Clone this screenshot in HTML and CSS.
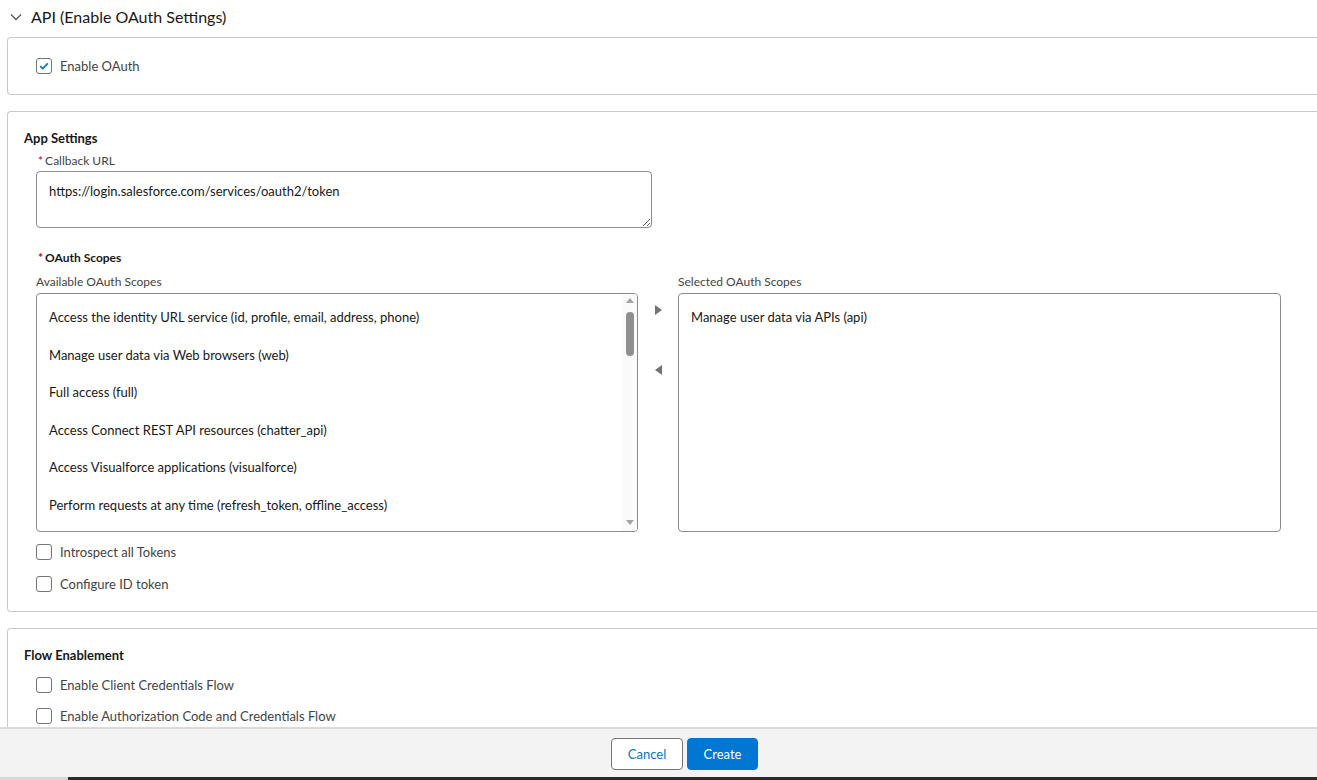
FILE: index.html
```html
<!DOCTYPE html>
<html lang="en">
<head>
<meta charset="utf-8">
<title>API (Enable OAuth Settings)</title>
<link rel="stylesheet" href="styles.css">
</head>
<body>
<div class="page">
  <div class="section-header">
    <svg class="chevron" width="12" height="8" viewBox="0 0 12 8"><path d="M1 1.5 L6 6.5 L11 1.5" fill="none" stroke="#5c5c5c" stroke-width="1.4"/></svg>
    <span class="section-title">API (Enable OAuth Settings)</span>
  </div>

  <div class="card card-oauth">
    <label class="check-row">
      <span class="checkbox checked"><svg width="10" height="8" viewBox="0 0 10 8"><path d="M1.2 4.2 L3.8 6.6 L8.8 1.4" fill="none" stroke="#0176d3" stroke-width="1.7"/></svg></span>
      <span class="check-label">Enable OAuth</span>
    </label>
  </div>

  <div class="card card-app">
    <div class="card-title">App Settings</div>
    <div class="field">
      <div class="field-label"><span class="req">*</span>Callback URL</div>
      <textarea class="textarea">https://login.salesforce.com/services/oauth2/token</textarea>
    </div>

    <div class="field scopes">
      <div class="scopes-title"><span class="req">*</span>OAuth Scopes</div>
      <div class="dual">
        <div class="dual-col">
          <div class="list-label">Available OAuth Scopes</div>
          <div class="listbox">
            <ul class="options">
              <li>Access the identity URL service (id, profile, email, address, phone)</li>
              <li>Manage user data via Web browsers (web)</li>
              <li>Full access (full)</li>
              <li>Access Connect REST API resources (chatter_api)</li>
              <li>Access Visualforce applications (visualforce)</li>
              <li>Perform requests at any time (refresh_token, offline_access)</li>
            </ul>
            <div class="scrollbar">
              <span class="sb-up"></span>
              <span class="sb-thumb"></span>
              <span class="sb-space"></span>
              <span class="sb-down"></span>
            </div>
          </div>
        </div>
        <div class="dual-buttons">
          <span class="tri-right"></span>
          <span class="tri-left"></span>
        </div>
        <div class="dual-col">
          <div class="list-label">Selected OAuth Scopes</div>
          <div class="listbox selected">
            <ul class="options">
              <li>Manage user data via APIs (api)</li>
            </ul>
          </div>
        </div>
      </div>
      <label class="check-row row32 first">
        <span class="checkbox"></span>
        <span class="check-label">Introspect all Tokens</span>
      </label>
      <label class="check-row row32">
        <span class="checkbox"></span>
        <span class="check-label">Configure ID token</span>
      </label>
    </div>
  </div>

  <div class="card card-flow">
    <div class="card-title">Flow Enablement</div>
    <div class="flow-list">
      <label class="check-row row31">
        <span class="checkbox"></span>
        <span class="check-label">Enable Client Credentials Flow</span>
      </label>
      <label class="check-row row31">
        <span class="checkbox"></span>
        <span class="check-label">Enable Authorization Code and Credentials Flow</span>
      </label>
    </div>
  </div>
</div>

<div class="footer">
  <div class="footer-bar">
    <button class="btn btn-neutral">Cancel</button>
    <button class="btn btn-brand">Create</button>
  </div>
  <div class="taskbar"><span class="tb-light"></span><span class="tb-dark"></span></div>
</div>
</body>
</html>
```

FILE: styles.css
```css
* { box-sizing: border-box; }
html, body { margin: 0; padding: 0; background: #fff; }
body {
  font-family: Lato, "Noto Sans", "Liberation Sans", sans-serif;
  color: #181818;
  font-size: 13px;
  overflow: hidden;
  height: 780px;
}
.page { padding-left: 7px; height: 780px; overflow: hidden; }

.section-header {
  height: 37px;
  display: flex;
  align-items: center;
  padding-left: 3px;
  padding-bottom: 4px;
}
.chevron { margin-right: 9px; }
.section-title { font-size: 16px; color: #181818; }

.card {
  border: 1px solid #c9c9c9;
  border-right: none;
  border-radius: 4px 0 0 4px;
  width: 1320px;
  margin-bottom: 16px;
}
.card-oauth {
  height: 58px;
  display: flex;
  align-items: center;
  padding-left: 28px;
}
.card-app { height: 501px; padding: 18px 0 0 16px; }
.card-flow { height: 200px; padding: 18px 0 0 16px; }

.card-title { font-size: 13px; font-weight: 700; line-height: 16px; height: 16px; }

.field { padding-left: 12px; }
.field-label {
  margin-top: 8px;
  font-size: 12px;
  line-height: 14px;
  color: #444;
  padding-left: 2px;
}
.req { color: #ba0517; margin-right: 2px; }
.textarea {
  display: block;
  margin-top: 3px;
  width: 616px;
  height: 57px;
  border: 1px solid #8c8c8c;
  border-radius: 4px;
  padding: 11px 12px;
  font-family: inherit;
  font-size: 13px;
  line-height: 16px;
  color: #181818;
  resize: vertical;
  outline: none;
}

.scopes { margin-top: 22px; }
.scopes-title {
  font-size: 12px;
  font-weight: 700;
  line-height: 16px;
  padding-left: 2px;
  color: #181818;
}
.dual { display: flex; margin-top: 9px; }
.dual-col { display: flex; flex-direction: column; }
.list-label { font-size: 12px; line-height: 14px; color: #444; height: 14px; }
.listbox {
  margin-top: 4px;
  width: 602px;
  height: 239px;
  border: 1px solid #8c8c8c;
  border-radius: 4px;
  display: flex;
  overflow: hidden;
}
.listbox.selected { width: 603px; }
.options {
  list-style: none;
  margin: 0;
  padding: 5px 0 0 12px;
  flex: 1;
}
.options li {
  height: 37.6px;
  line-height: 37.6px;
  font-size: 13px;
  color: #181818;
  white-space: nowrap;
}
.scrollbar {
  width: 15px;
  background: #fafafa;
  display: flex;
  flex-direction: column;
  align-items: center;
  padding: 4px 0 6px;
}
.sb-up {
  width: 0; height: 0;
  border-left: 4px solid transparent;
  border-right: 4px solid transparent;
  border-bottom: 5px solid #a3a3a3;
}
.sb-thumb {
  margin-top: 9px;
  width: 8px;
  height: 44px;
  border-radius: 4px;
  background: #8f8f8f;
}
.sb-space { flex: 1; }
.sb-down {
  width: 0; height: 0;
  border-left: 4px solid transparent;
  border-right: 4px solid transparent;
  border-top: 5px solid #a3a3a3;
}
.dual-buttons {
  width: 40px;
  display: flex;
  flex-direction: column;
  align-items: center;
  padding-top: 30px;
  gap: 50px;
}
.tri-right {
  width: 0; height: 0;
  border-top: 5px solid transparent;
  border-bottom: 5px solid transparent;
  border-left: 7px solid #747474;
}
.tri-left {
  width: 0; height: 0;
  border-top: 5px solid transparent;
  border-bottom: 5px solid transparent;
  border-right: 7px solid #747474;
}

.check-row { display: flex; align-items: center; cursor: default; }
.row32 { height: 32px; }
.row32.first { margin-top: 4px; }
.row31 { height: 31px; }
.flow-list { margin-top: 6px; padding-left: 12px; }
.checkbox {
  width: 16px;
  height: 16px;
  border: 1px solid #747474;
  border-radius: 3px;
  background: #fff;
  display: flex;
  align-items: center;
  justify-content: center;
  margin-right: 8px;
}
.check-label { font-size: 13px; color: #444; }

.footer {
  position: fixed;
  left: 0; right: 0; bottom: 0;
  height: 53px;
  display: flex;
  flex-direction: column;
}
.footer-bar {
  flex: 1;
  background: #f3f3f3;
  border-top: 2px solid #dddbda;
  display: flex;
  justify-content: center;
  align-items: center;
  gap: 4px;
  padding-left: 52px;
  padding-top: 1px;
}
.btn {
  height: 32px;
  border-radius: 4px;
  font-family: inherit;
  font-size: 13px;
  padding: 0;
  cursor: pointer;
}
.btn-neutral {
  width: 72px;
  background: #fff;
  border: 1px solid #747474;
  color: #0176d3;
}
.btn-brand {
  width: 71px;
  background: #0176d3;
  border: 1px solid #0176d3;
  color: #fff;
}
.taskbar { height: 3px; display: flex; }
.tb-light { width: 68px; background: #d8d8d8; }
.tb-dark { flex: 1; background: #2b2b2b; }
```
